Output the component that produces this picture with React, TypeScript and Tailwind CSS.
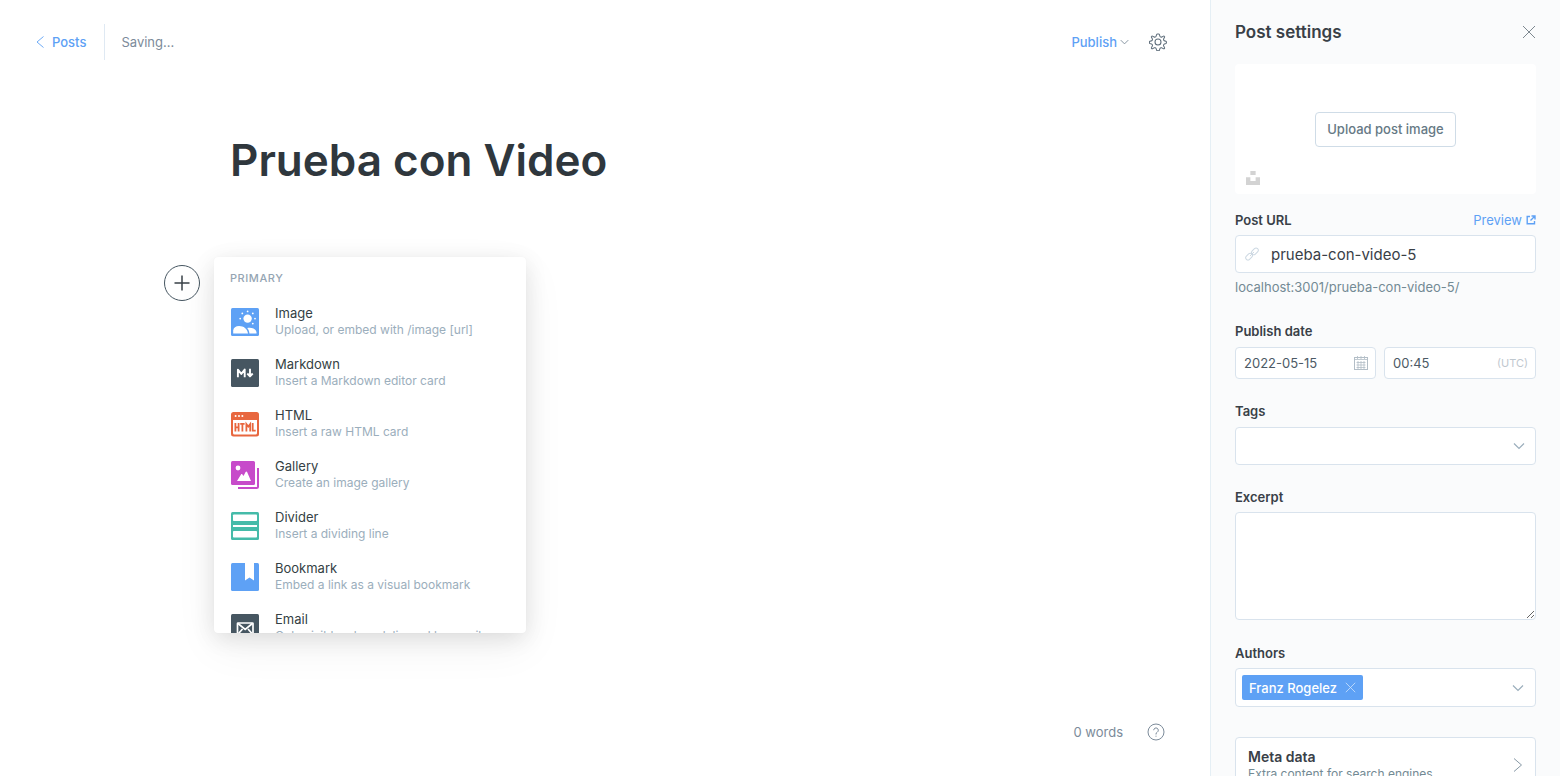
import { useState, type ReactNode } from "react";

type Card = { name: string; description: string; icon: ReactNode };

function ImageIcon() {
  return (
    <svg viewBox="0 0 28 28" className="size-7 shrink-0" aria-hidden="true">
      <rect width="28" height="28" rx="1.5" fill="#5ea1f5" />
      <g fill="#fff">
        <circle cx="16.6" cy="10.6" r="4.2" />
        <circle cx="16.6" cy="3.4" r="0.9" />
        <circle cx="11.3" cy="5.4" r="0.9" />
        <circle cx="21.8" cy="5.4" r="0.9" />
        <circle cx="9.2" cy="10.6" r="0.9" />
        <circle cx="24" cy="10.6" r="0.9" />
        <circle cx="21.8" cy="15.6" r="0.9" />
        <path d="M2.2 25.5V22.500C2.500 19.600 4.800 18.200 8 18.100C12.500 18 16.200 20.800 17 25.500Z" />
        <path d="M18.400 25.500C18.300 23.300 17.600 21.500 16.200 19.900C20.600 18.900 25 20.700 25.500 24.300V25.500Z" />
      </g>
    </svg>
  );
}

function MarkdownIcon() {
  return (
    <svg viewBox="0 0 28 28" className="size-7 shrink-0" aria-hidden="true">
      <rect width="28" height="28" rx="1.5" fill="#465661" />
      <g fill="none" stroke="#fff" strokeWidth="1.9" strokeLinejoin="round">
        <path d="M6.900 18.200v-7.600l3.400 4.300 3.400-4.300v7.600" />
        <path d="M19 9.700v7M16.300 14.500l2.700 2.900 2.700-2.900" />
      </g>
    </svg>
  );
}

function HtmlIcon() {
  return (
    <svg viewBox="0 0 28 28" className="size-7 shrink-0" aria-hidden="true">
      <rect y="2" width="28" height="24.500" rx="2.500" fill="#e8673f" />
      <path d="M2 10h24v13a1.500 1.500 0 0 1-1.500 1.500h-21A1.500 1.500 0 0 1 2 23z" fill="#fff" />
      <g fill="#fff">
        <circle cx="4.600" cy="6" r="1" />
        <circle cx="8" cy="6" r="1" />
        <circle cx="11.400" cy="6" r="1" />
      </g>
      <g fill="none" stroke="#e8673f" strokeWidth="1.800">
        <path d="M4.400 13v8.500M7.600 13v8.500M4.400 17.300h3.200" />
        <path d="M9.200 13.900h4.400M11.400 13.900v7.600" />
        <path d="M15.400 21.500v-7.300l1.900 2.400 1.900-2.400v7.300" />
        <path d="M21.700 13v7.600h3" />
      </g>
    </svg>
  );
}

function GalleryIcon() {
  return (
    <svg viewBox="0 0 28 28" className="size-7 shrink-0" aria-hidden="true">
      <rect width="24" height="24" rx="1.500" fill="#c74bca" />
      <path d="M27 7v18.500a1.500 1.500 0 0 1-1.500 1.500H7" fill="none" stroke="#c74bca" strokeWidth="2" />
      <circle cx="7" cy="7" r="2.400" fill="#fff" />
      <path d="M6 20l4-6.600c.4-.6 1-.6 1.400 0l1.100 1.500 2.100-4c.4-.7 1.100-.7 1.500 0L20 20z" fill="#fff" />
    </svg>
  );
}

function DividerIcon() {
  return (
    <svg viewBox="0 0 28 28" className="size-7 shrink-0" aria-hidden="true">
      <rect width="28" height="28" rx="1.500" fill="#45bba9" />
      <g fill="#fff">
        <rect x="2" y="2.500" width="24" height="6.500" rx="0.800" />
        <rect x="2" y="13" width="24" height="2" />
        <rect x="2" y="19" width="24" height="6.500" rx="0.800" />
      </g>
    </svg>
  );
}

function BookmarkIcon() {
  return (
    <svg viewBox="0 0 28 28" className="size-7 shrink-0" aria-hidden="true">
      <rect width="28" height="28" rx="1.500" fill="#5ea1f5" />
      <path d="M14 0h9v17.500l-4.500-3-4.500 3z" fill="#fff" />
    </svg>
  );
}

function EmailIcon() {
  return (
    <svg viewBox="0 0 28 28" className="size-7 shrink-0" aria-hidden="true">
      <rect width="28" height="28" rx="1.500" fill="#465661" />
      <g fill="none" stroke="#fff" strokeWidth="1.700">
        <rect x="6.500" y="9" width="15.500" height="12" rx="0.500" />
        <path d="M7 9.500l7.200 6 7.200-6M7.500 19.500l4-4.500M21 19.500l-4-4.500" />
      </g>
    </svg>
  );
}

const cards: Card[] = [
  { name: "Image", description: "Upload, or embed with /image [url]", icon: <ImageIcon /> },
  { name: "Markdown", description: "Insert a Markdown editor card", icon: <MarkdownIcon /> },
  { name: "HTML", description: "Insert a raw HTML card", icon: <HtmlIcon /> },
  { name: "Gallery", description: "Create an image gallery", icon: <GalleryIcon /> },
  { name: "Divider", description: "Insert a dividing line", icon: <DividerIcon /> },
  { name: "Bookmark", description: "Embed a link as a visual bookmark", icon: <BookmarkIcon /> },
  { name: "Email", description: "Only visible when delivered by email", icon: <EmailIcon /> },
];

function Chevron({ className }: { className: string }) {
  return (
    <svg viewBox="0 0 12 8" className={className} fill="none" stroke="currentColor" strokeWidth="1.200" aria-hidden="true">
      <path d="M1 1.500l5 5 5-5" />
    </svg>
  );
}

function Cross({ className }: { className: string }) {
  return (
    <svg viewBox="0 0 14 14" className={className} fill="none" stroke="currentColor" aria-hidden="true">
      <path d="M1 1l12 12M13 1L1 13" />
    </svg>
  );
}

function GearIcon() {
  return (
    <svg viewBox="0 0 24 24" className="size-[18px]" fill="none" stroke="currentColor" strokeWidth="1.400" strokeLinejoin="round" aria-hidden="true">
      <circle cx="12" cy="12" r="4" />
      <path d="M13.800 1.900l.7 2.300a2 2 0 0 0 2.700 1.100l2.100-1.100a1 1 0 0 1 1.200.2 1 1 0 0 1 .2 1.200l-1.100 2.200a2 2 0 0 0 1.100 2.700l1.900.6a1 1 0 0 1 .6 1v1a1 1 0 0 1-.6.900l-2 .7a2 2 0 0 0-1 2.700l1.100 2.100a1 1 0 0 1-.2 1.200 1 1 0 0 1-1.200.2l-2.200-1.100a2 2 0 0 0-2.600 1.100l-.7 2.200a1 1 0 0 1-1 .6h-1.500a1 1 0 0 1-1-.6l-.8-2.200a2 2 0 0 0-2.700-1.100l-2.100 1.100a1 1 0 0 1-1.200-.2 1 1 0 0 1-.2-1.200l1.100-2.200a2 2 0 0 0-1.100-2.600l-2.100-.7a1 1 0 0 1-.6-.9v-1a1 1 0 0 1 .6-1l2.100-.6a2 2 0 0 0 1.100-2.700L3.300 5.600a1 1 0 0 1 .2-1.200 1 1 0 0 1 1.200-.2l2.100 1.100a2 2 0 0 0 2.700-1.100l.8-2.300a1 1 0 0 1 1-.6h1.500a1 1 0 0 1 1 .6z" />
    </svg>
  );
}

function CalendarIcon() {
  return (
    <svg viewBox="0 0 14 14" className="size-3.5" fill="none" stroke="currentColor" aria-hidden="true">
      <rect x="0.500" y="1.500" width="13" height="12" />
      <path d="M0.500 3.500h13M3.500 0v3M7 0v3M10.500 0v3M2.500 6.500h9M2.500 9h9M2.500 11.500h9M4 5v8M7 5v8M10 5v8" strokeWidth="0.800" />
    </svg>
  );
}

function LinkIcon() {
  return (
    <svg viewBox="0 0 24 24" className="size-3.5" fill="none" stroke="currentColor" strokeWidth="1.700" aria-hidden="true">
      <rect x="10.500" y="3.700" width="13" height="7.600" rx="3.800" transform="rotate(-45 17 7.500)" />
      <rect x="0.500" y="12.700" width="13" height="7.600" rx="3.800" transform="rotate(-45 7 16.500)" />
      <path d="M8.500 15.500l7-7" />
    </svg>
  );
}

const labelClass = "block text-[13px] leading-5 font-semibold text-[#394047]";
const boxClass = "rounded border border-[#d9e3ed] bg-white";

export default function App() {
  const [title, setTitle] = useState("Prueba con Video");
  const [slug, setSlug] = useState("prueba-con-video-5");
  const [date, setDate] = useState("2022-05-15");
  const [time, setTime] = useState("00:45");

  return (
    <div className="flex h-screen overflow-hidden bg-white font-['Inter',sans-serif] text-[13px] leading-5 text-[#394047]">
      <main className="flex min-w-0 flex-1 flex-col">
        <header className="flex items-center justify-between pt-6 pr-[43px] pl-9">
          <div className="flex items-center">
            <a href="#posts" className="flex items-center gap-2 pr-[18px] font-medium text-[#5ea1f5]">
              <svg viewBox="0 0 8 14" className="h-3.5 w-2" fill="none" stroke="currentColor" strokeWidth="0.900" aria-hidden="true">
                <path d="M7.500 1.500L1 7l6.500 5.500" />
              </svg>
              Posts
            </a>
            <span className="flex h-9 items-center border-l border-[#dfe9f3] pl-4 text-[#7c8b9a]">Saving...</span>
          </div>
          <div className="flex items-center gap-5">
            <button type="button" className="flex items-center gap-[3px] font-medium text-[#5ea1f5]">
              Publish
              <Chevron className="h-[6px] w-[9px] text-[#7c8b9a]" />
            </button>
            <button type="button" aria-label="Settings" className="text-[#5f6e7b]">
              <GearIcon />
            </button>
          </div>
        </header>

        <section className="mx-auto w-full max-w-[750px] flex-1 pt-[68px]">
          <h1>
            <input
              aria-label="Post title"
              value={title}
              onChange={(e) => setTitle(e.target.value)}
              className="block h-16 w-full text-[44px] font-semibold text-[#2f373d] outline-none"
            />
          </h1>
          <div className="relative mt-[65px]">
            <div className="absolute top-2 right-full mr-[30px]">
              <button type="button" aria-label="Add a card" className="flex size-9 items-center justify-center rounded-full border border-[#465661] text-[#394047]">
                <svg viewBox="0 0 16 16" className="size-4" stroke="currentColor" strokeWidth="1.500" aria-hidden="true">
                  <path d="M8 .5v15M.5 8h15" />
                </svg>
              </button>
            </div>
            <div className="absolute top-0 -left-4 h-[376px] w-[312px] overflow-hidden rounded bg-white px-4 pt-[13px] shadow-[0_0_1px_rgba(0,0,0,0.050),0_5px_22px_rgba(0,0,0,0.100),0_14px_44px_rgba(0,0,0,0.060)]">
              <h2 className="text-[11px] leading-4 font-medium tracking-wider text-[#95a5b3] uppercase">Primary</h2>
              <ul className="mt-2.5">
                {cards.map((card) => (
                  <li key={card.name}>
                    <button type="button" className="flex h-[51px] w-full items-center gap-4 pl-px text-left">
                      {card.icon}
                      <span className="flex min-w-0 flex-col">
                        <span className="text-[13px] leading-4 text-[#343f44]">{card.name}</span>
                        <span className="text-xs leading-[17px] whitespace-nowrap text-[#9baebc]">{card.description}</span>
                      </span>
                    </button>
                  </li>
                ))}
              </ul>
            </div>
          </div>
        </section>

        <footer className="flex items-center justify-end gap-6 pr-[45px] pb-[34px] text-[#7c8b9a]">
          <span>0 words</span>
          <button type="button" aria-label="Help">
            <svg viewBox="0 0 18 18" className="size-[18px]" fill="none" stroke="currentColor" aria-hidden="true">
              <circle cx="9" cy="9" r="8" />
              <path d="M6.700 7.200a2.300 2.300 0 1 1 3.500 2c-.8.500-1.200.9-1.200 1.900v.4M9 12.700v1" />
            </svg>
          </button>
        </footer>
      </main>

      <aside className="w-[350px] shrink-0 overflow-hidden border-l border-[#e5eff5] bg-[#fafbfc] px-6">
        <header className="flex h-16 items-center justify-between">
          <h2 className="text-[17px] leading-6 font-semibold text-[#394047]">Post settings</h2>
          <button type="button" aria-label="Close" className="text-[#7d8890]">
            <Cross className="size-3.5" />
          </button>
        </header>

        <div className="relative flex h-[130px] items-center justify-center rounded bg-white">
          <button type="button" className="h-[35px] rounded border border-[#cfdce7] bg-white px-[11px] font-medium text-[#667985]">
            Upload post image
          </button>
          <button type="button" aria-label="Choose from Unsplash" className="absolute bottom-[9px] left-[11px] text-[#d3d3d3]">
            <svg viewBox="0 0 32 32" className="block size-3.5" fill="currentColor" aria-hidden="true">
              <path d="M10 9V0h12v9H10zm12 5h10v18H0V14h10v9h12v-9z" />
            </svg>
          </button>
        </div>

        <div className="mt-4 flex items-center justify-between">
          <label htmlFor="url" className={labelClass}>Post URL</label>
          <a href="#preview" className="flex items-center gap-1 text-[#5ea1f5]">
            Preview
            <svg viewBox="0 0 10 10" className="size-2.5" fill="none" stroke="currentColor" strokeWidth="1.400" aria-hidden="true">
              <path d="M4 1.500H1.200v7.300h7.300V6M5.500 1h3.500v3.500M9 1L4.500 5.500" />
            </svg>
          </a>
        </div>
        <div className="relative mt-[5px]">
          <span className="absolute inset-y-0 left-2.5 flex items-center text-[#ccd8e2]">
            <LinkIcon />
          </span>
          <input id="url" value={slug} onChange={(e) => setSlug(e.target.value)} className={`${boxClass} block h-[38px] w-full pr-3 pl-[35px] text-[15px] outline-none`} />
        </div>
        <p className="mt-1 text-[#738a94]">localhost:3001/prueba-con-video-5/</p>

        <label htmlFor="date" className={`${labelClass} mt-6`}>Publish date</label>
        <div className="mt-1.5 flex gap-2">
          <div className="relative w-[141px]">
            <input id="date" value={date} onChange={(e) => setDate(e.target.value)} className={`${boxClass} block h-8 w-full px-2 text-[#4c5a65] outline-none`} />
            <span className="absolute inset-y-0 right-2 flex items-center text-[#b3bec7]">
              <CalendarIcon />
            </span>
          </div>
          <div className="relative flex-1">
            <input aria-label="Publish time" value={time} onChange={(e) => setTime(e.target.value)} className={`${boxClass} block h-8 w-full px-2 text-[#4c5a65] outline-none`} />
            <span className="absolute inset-y-0 right-2 flex items-center text-[11px] text-[#bfc8cf]">(UTC)</span>
          </div>
        </div>

        <label htmlFor="tags" className={`${labelClass} mt-[22px]`}>Tags</label>
        <div className="relative mt-1.5">
          <select id="tags" className={`${boxClass} block h-[38px] w-full appearance-none px-3 outline-none`}>
            <option value=""></option>
          </select>
          <span className="pointer-events-none absolute inset-y-0 right-[11px] flex items-center text-[#9baebc]">
            <Chevron className="h-2 w-3" />
          </span>
        </div>

        <label htmlFor="excerpt" className={`${labelClass} mt-[22px]`}>Excerpt</label>
        <textarea id="excerpt" className={`${boxClass} mt-[5px] block h-[108px] w-full resize-y px-3 py-2 outline-none`} />

        <h3 className={`${labelClass} mt-[23px]`}>Authors</h3>
        <div className={`${boxClass} mt-[5px] flex h-[39px] items-center justify-between pr-[11px] pl-1.5`}>
          <span className="flex h-[25px] items-center gap-2 rounded-xs bg-[#5ea1f5] px-[7px] font-medium text-white">
            Franz Rogelez
            <button type="button" aria-label="Remove Franz Rogelez" className="text-[#cfe4fc]">
              <Cross className="size-[11px]" />
            </button>
          </span>
          <button type="button" aria-label="Choose authors" className="text-[#9baebc]">
            <Chevron className="h-2 w-3" />
          </button>
        </div>

        <button type="button" className={`${boxClass} mt-[30px] flex w-full items-center justify-between py-2.5 pr-3 pl-3 text-left`}>
          <span className="flex flex-col">
            <span className="text-sm leading-[18px] font-semibold">Meta data</span>
            <span className="text-xs leading-4 text-[#738a94]">Extra content for search engines</span>
          </span>
          <svg viewBox="0 0 10 14" className="h-3.5 w-2.5 text-[#8798a5]" fill="none" stroke="currentColor" aria-hidden="true">
            <path d="M1 .5L8.500 7 1 13.500" />
          </svg>
        </button>
      </aside>
    </div>
  );
}
